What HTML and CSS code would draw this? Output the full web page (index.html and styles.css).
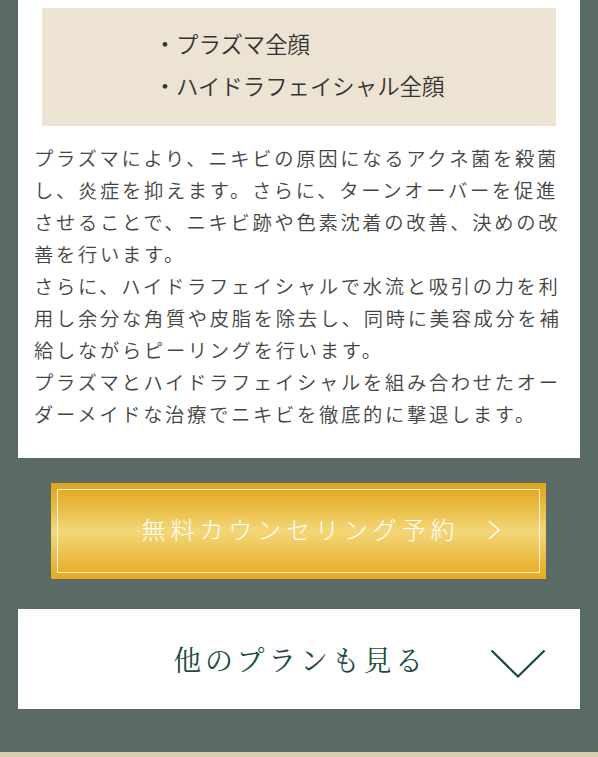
FILE: index.html
```html
<!DOCTYPE html>
<html lang="ja">
<head>
<meta charset="utf-8">
<title>プラン</title>
<link rel="stylesheet" href="styles.css">
</head>
<body>
<main class="page">
  <section class="card">
    <div class="menu-box">
      <ul class="menu-list">
        <li>・プラズマ全顔</li>
        <li>・ハイドラフェイシャル全顔</li>
      </ul>
    </div>
    <p class="desc">プラズマにより、ニキビの原因になるアクネ菌を殺菌し、炎症を抑えます。さらに、ターンオーバーを促進させることで、ニキビ跡や色素沈着の改善、決めの改善を行います。<br>さらに、ハイドラフェイシャルで水流と吸引の力を利用し余分な角質や皮脂を除去し、同時に美容成分を補給しながらピーリングを行います。<br>プラズマとハイドラフェイシャルを組み合わせたオーダーメイドな治療でニキビを徹底的に撃退します。</p>
  </section>

  <a class="gold-btn" href="#">
    <span class="gold-inner">
      <span class="gold-label">無料カウンセリング予約</span>
      <svg class="gold-arrow" width="14" height="22" viewBox="0 0 14 22" aria-hidden="true">
        <polyline points="2,2 12,11 2,20" fill="none" stroke="#ffffff" stroke-width="1.6"/>
      </svg>
    </span>
  </a>

  <a class="more-btn" href="#">
    <span class="more-label">他のプランも見る</span>
    <svg class="more-arrow" width="56" height="30" viewBox="0 0 56 30" aria-hidden="true">
      <polyline points="1.5,1.5 28,27.5 54.5,1.5" fill="none" stroke="#154a3c" stroke-width="2.2"/>
    </svg>
  </a>
</main>
<div class="footer-strip"></div>
</body>
</html>
```

FILE: styles.css
```css
html, body {
  margin: 0;
  padding: 0;
}
body {
  background: #596b64;
  font-family: "Noto Sans CJK JP", "Noto Sans", sans-serif;
  height: 757px;
  overflow: hidden;
  display: flex;
  flex-direction: column;
}
.page {
  display: flex;
  flex-direction: column;
  padding: 0 18px;
  height: 752px;
  box-sizing: border-box;
}
.card {
  background: #ffffff;
  padding: 8px 24px 28px 24px;
}
.menu-box {
  background: #ece3d3;
  height: 118px;
  box-sizing: border-box;
  padding-bottom: 6px;
  display: flex;
  justify-content: center;
  align-items: center;
}
.menu-list {
  list-style: none;
  margin: 0;
  padding: 0;
  font-size: 22.4px;
  font-weight: 350;
  line-height: 42px;
  color: #333333;
}
.desc {
  margin: 16px -10px 0 -8px;
  font-size: 19.3px;
  font-weight: 350;
  letter-spacing: 2.7px;
  line-height: 32px;
  color: #444444;
}
.gold-btn {
  display: block;
  margin: 25px 34px 0 33px;
  height: 96px;
  padding: 6px;
  box-sizing: border-box;
  text-decoration: none;
  background: linear-gradient(to bottom, #e1a31c 0%, #eabf48 28%, #f4d77a 50%, #ecc250 72%, #e8aa1e 100%);
}
.gold-inner {
  position: relative;
  display: flex;
  align-items: center;
  justify-content: center;
  height: 100%;
  border: 1px solid rgba(255, 255, 255, 0.85);
  box-sizing: border-box;
}
.gold-label {
  color: #ffffff;
  font-size: 24px;
  font-weight: 300;
  letter-spacing: 4.9px;
  margin-left: 4px;
  margin-bottom: 6px;
}
.gold-arrow {
  position: absolute;
  right: 38px;
  top: 29px;
}
.more-btn {
  position: relative;
  display: flex;
  align-items: center;
  justify-content: center;
  margin-top: 30px;
  height: 100px;
  background: #ffffff;
  text-decoration: none;
}
.more-label {
  font-family: "Noto Serif CJK JP", "IPAMincho", "Liberation Serif", serif;
  color: #1d4a3e;
  font-size: 28px;
  letter-spacing: 3.7px;
  margin-left: 2px;
}
.more-arrow {
  position: absolute;
  right: 34px;
  top: 40px;
}
.footer-strip {
  height: 5px;
  background: #d8cdb1;
}
```
